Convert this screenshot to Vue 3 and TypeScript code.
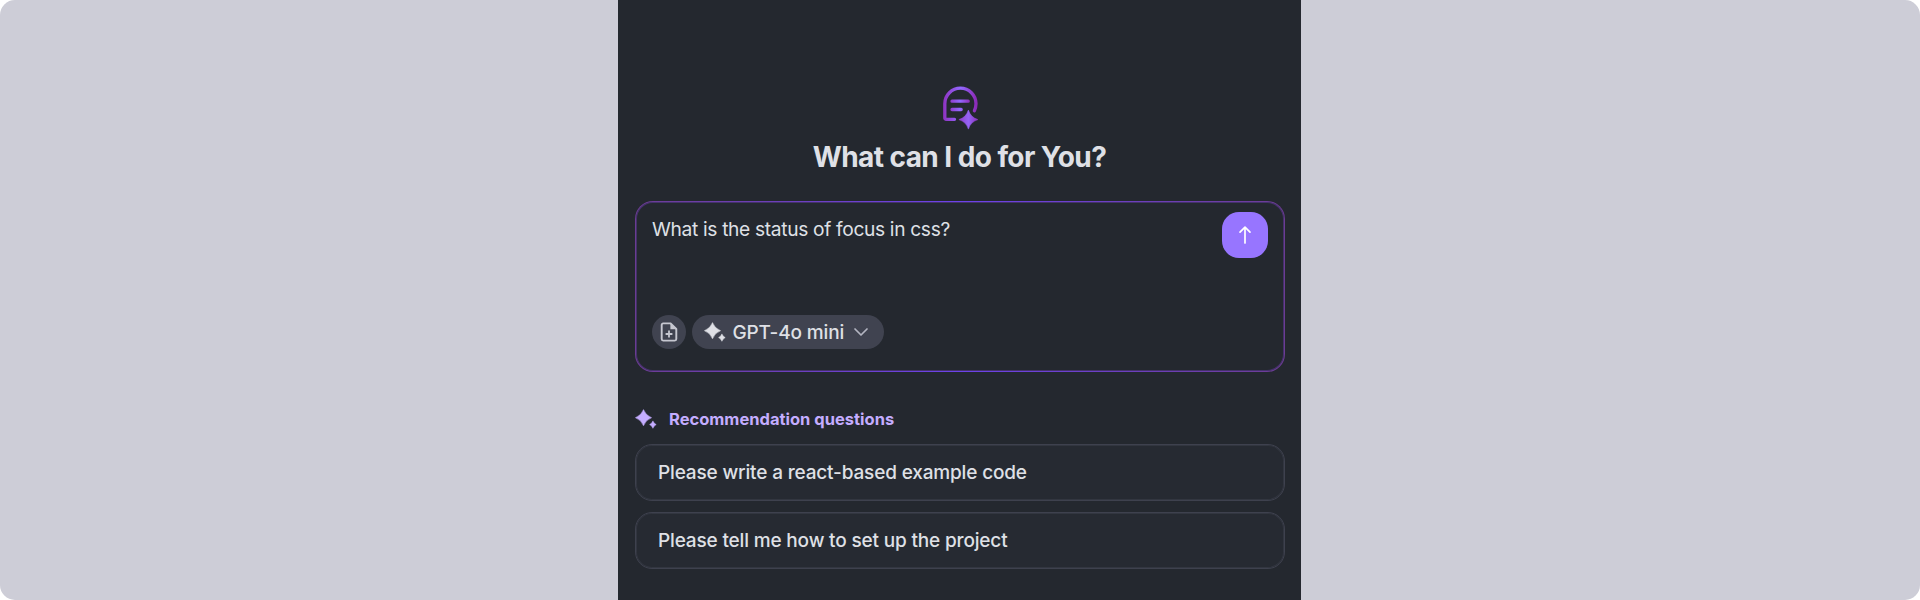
<script setup lang="ts">
const prompt: string = 'What is the status of focus in css?'
const model: string = 'GPT-4o mini'
const questions: string[] = [
  'Please write a react-based example code',
  'Please tell me how to set up the project',
]
</script>

<template>
  <main class="stage">
    <section class="panel">
      <svg class="logo" width="38" height="44" viewBox="0 0 38 44" fill="none">
        <defs>
          <linearGradient id="logo-gradient" gradientUnits="userSpaceOnUse" x1="2" y1="0" x2="36" y2="0">
            <stop offset="0" stop-color="#8f2fbd" />
            <stop offset="0.55" stop-color="#9269ff" />
            <stop offset="1" stop-color="#8c2bb8" />
          </linearGradient>
          <linearGradient id="line-gradient" gradientUnits="userSpaceOnUse" x1="9" y1="0" x2="29" y2="0">
            <stop offset="0" stop-color="#8f36c6" />
            <stop offset="0.55" stop-color="#9269ff" />
            <stop offset="1" stop-color="#8f32c0" />
          </linearGradient>
          <linearGradient id="star-gradient" x1="0" y1="0" x2="1" y2="0">
            <stop offset="0" stop-color="#8f3cca" />
            <stop offset="0.5" stop-color="#9464f5" />
            <stop offset="1" stop-color="#8c30bd" />
          </linearGradient>
        </defs>
        <g stroke-width="3.3" stroke-linecap="round" stroke-linejoin="round">
          <path d="M14.5 35.3H6.1a1.3 1.3 0 0 1-1.3-1.3V19.8a15.6 15.6 0 0 1 31.2 0c0 2.4-.5 4.7-1.6 6.9" stroke="url(#logo-gradient)" />
          <path d="M12 17.2H28.2V17.21M12 25.5H21.2V25.51" stroke="url(#line-gradient)" />
        </g>
        <path d="M28.4 26.1Q30.6 33.4 37.9 35.6Q30.6 37.8 28.4 45.1Q26.2 37.8 18.9 35.6Q26.2 33.4 28.4 26.1Z" fill="url(#star-gradient)" stroke="url(#star-gradient)" stroke-width=".6" stroke-linejoin="round" />
      </svg>
      <h1 class="title">What can I do for You?</h1>

      <div class="composer">
        <div class="composer-top">
          <p class="prompt">{{ prompt }}</p>
          <button class="send" type="button" aria-label="Send">
            <svg width="14" height="20" viewBox="0 0 14 20" fill="none" stroke="#fff" stroke-width="1.7" stroke-linecap="round" stroke-linejoin="round">
              <path d="M7 18V2.4M2 7.2L7 2.2L12 7.2" />
            </svg>
          </button>
        </div>
        <div class="tools">
          <button class="attach" type="button" aria-label="Add file">
            <svg width="18" height="20" viewBox="0 0 18 20" fill="none">
              <path d="M10.6 1.4H3.2A1.5 1.5 0 0 0 1.7 2.9V17.1A1.5 1.5 0 0 0 3.2 18.6H14.8A1.5 1.5 0 0 0 16.3 17.1V7Z" stroke="#c6c7d0" stroke-width="1.9" stroke-linejoin="round" />
              <path d="M10.4 1L16.8 7.3H10.4Z" fill="#c6c7d0" />
              <path d="M9 8.6V15.4M5.6 12H12.4" stroke="#c6c7d0" stroke-width="1.8" />
            </svg>
          </button>
          <button class="model" type="button">
            <svg class="sparkle" width="22" height="20" viewBox="0 0 22 20">
              <path d="M8.5.6Q10.7 6.5 16.6 8.7Q10.7 10.9 8.5 16.8Q6.3 10.9.4 8.7Q6.3 6.5 8.5.6Z" />
              <path d="M17.9 11.9Q19 14.6 21.2 15.6Q19 16.6 17.9 19.3Q16.9 16.6 14.6 15.6Q16.9 14.6 17.9 11.9Z" />
            </svg>
            <span class="model-name">{{ model }}</span>
            <svg class="chevron" width="16" height="10" viewBox="0 0 16 10" fill="none" stroke="#b3b5c1" stroke-width="1.7" stroke-linecap="round" stroke-linejoin="round">
              <path d="M2 2L8 8L14 2" />
            </svg>
          </button>
        </div>
      </div>

      <div class="heading">
        <svg class="sparkle" width="22" height="20" viewBox="0 0 22 20">
          <path d="M8.5.6Q10.7 6.5 16.6 8.7Q10.7 10.9 8.5 16.8Q6.3 10.9.4 8.7Q6.3 6.5 8.5.6Z" />
          <path d="M17.9 11.9Q19 14.6 21.2 15.6Q19 16.6 17.9 19.3Q16.9 16.6 14.6 15.6Q16.9 14.6 17.9 11.9Z" />
        </svg>
        <h2 class="heading-text">Recommendation questions</h2>
      </div>
      <ul class="questions">
        <li v-for="question in questions" :key="question" class="question">
          <span>{{ question }}</span>
        </li>
      </ul>
    </section>
  </main>
</template>

<style>
body {
  background: #fff;
}
</style>

<style scoped>
.stage {
  box-sizing: border-box;
  display: flex;
  justify-content: center;
  height: 600px;
  padding-right: 1px;
  overflow: hidden;
  border-radius: 15px;
  background: #cdcdd7;
  font-family: Inter, "Liberation Sans", sans-serif;
  color: #dfe0e6;
}
.panel {
  box-sizing: border-box;
  display: flex;
  flex-direction: column;
  width: 683px;
  height: 600px;
  padding: 84px 16px 0 17px;
  background: #24282f;
}
.logo {
  align-self: center;
  flex: none;
  margin-right: 2px;
  overflow: visible;
}
.title {
  margin: 12px 1px 0 0;
  height: 34px;
  line-height: 34px;
  text-align: center;
  font-size: 28px;
  font-weight: 700;
  letter-spacing: -0.57px;
  white-space: nowrap;
}
.composer {
  box-sizing: border-box;
  display: flex;
  flex-direction: column;
  justify-content: space-between;
  flex: none;
  height: 171px;
  margin-top: 27px;
  padding: 10px 16px 22px;
  border: 1px solid transparent;
  border-radius: 18px;
  background:
    linear-gradient(#24282f, #24282f) padding-box,
    linear-gradient(90deg, #6c3c94, #6c42ea 50%, #6c3c94) border-box;
  box-shadow: inset 0 0 0 1px rgba(108, 62, 180, 0.45);
}
.composer-top {
  display: flex;
  justify-content: space-between;
}
.prompt {
  margin: 4px 0 0;
  line-height: 26px;
  font-size: 19.2px;
  font-weight: 400;
  letter-spacing: -0.34px;
  white-space: nowrap;
}
button {
  padding: 0;
  border: 0;
  font-family: inherit;
  color: inherit;
}
.send {
  display: flex;
  align-items: center;
  justify-content: center;
  width: 46px;
  height: 46px;
  border-radius: 17px;
  background: #9775ff;
}
.tools {
  display: flex;
  gap: 6px;
}
.attach {
  display: flex;
  align-items: center;
  justify-content: center;
  width: 34px;
  height: 34px;
  border-radius: 50%;
  background: #404350;
}
.model {
  box-sizing: border-box;
  display: flex;
  align-items: center;
  width: 192px;
  height: 34px;
  padding: 0 15px 0 12px;
  border-radius: 17px;
  background: #404350;
}
.sparkle {
  fill: currentColor;
  stroke: currentColor;
  stroke-width: 0.5px;
  stroke-linejoin: round;
}
.model-name {
  margin-left: 6.5px;
  padding-top: 2px;
  font-size: 19px;
  font-weight: 500;
  line-height: 32px;
  letter-spacing: -0.15px;
  white-space: nowrap;
}
.chevron {
  margin-left: auto;
}
.heading {
  display: flex;
  align-items: center;
  height: 24px;
  margin-top: 35px;
  color: #c4adff;
}
.heading-text {
  margin: 0 0 0 12px;
  font-size: 16.5px;
  font-weight: 700;
  line-height: 24px;
  letter-spacing: 0;
  white-space: nowrap;
}
.questions {
  display: flex;
  flex-direction: column;
  gap: 11px;
  margin: 13px 0 0;
  padding: 0;
  list-style: none;
}
.question {
  box-sizing: border-box;
  display: flex;
  align-items: center;
  height: 57px;
  padding-left: 22px;
  border: 1px solid #3e414e;
  border-radius: 17px;
  background: #262a32;
  box-shadow: inset 0 0 0 1px rgba(62, 65, 78, 0.5);
  font-size: 19px;
  font-weight: 500;
  letter-spacing: -0.16px;
  white-space: nowrap;
}
</style>
